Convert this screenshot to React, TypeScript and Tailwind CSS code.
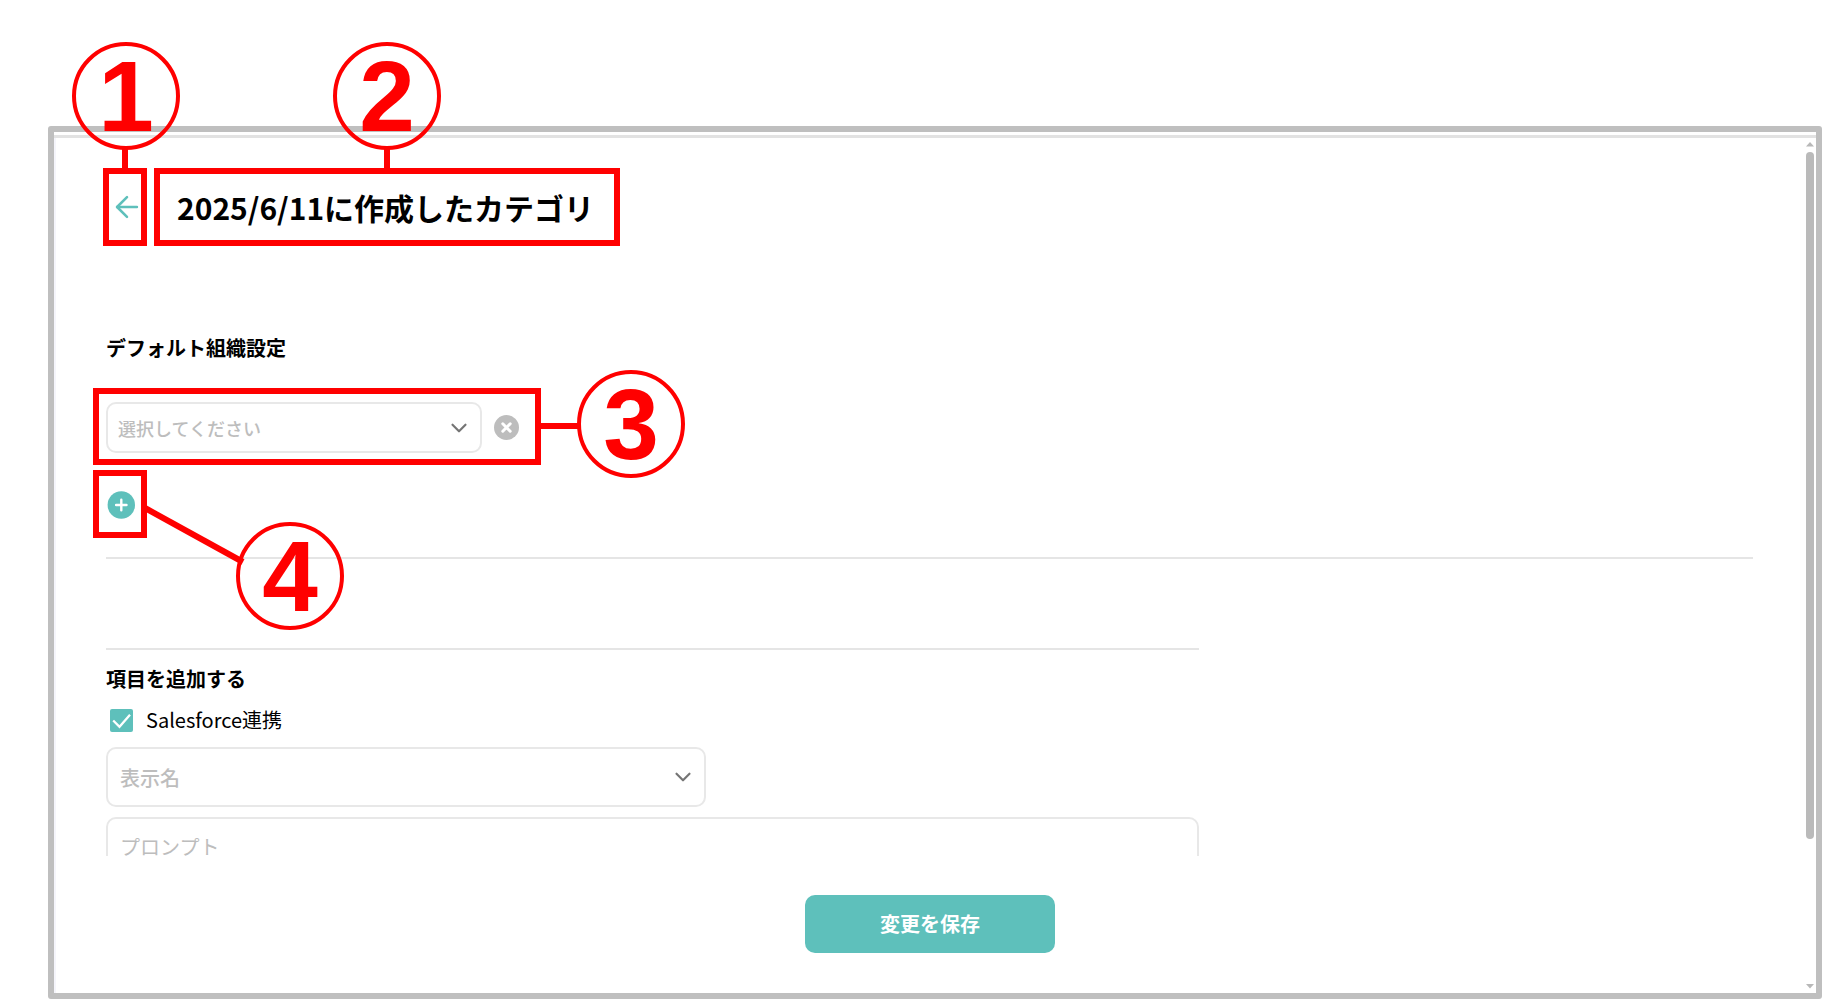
import React, { FC, ReactNode } from "react";
import { ArrowLeft, ChevronDown } from "lucide-react";

interface IBadge {
  label: string;
  customClass?: string;
}

const Badge: FC<IBadge> = ({ label, customClass }) => {
  return (
    <span
      className={`absolute flex h-[108px] w-[108px] items-center justify-center rounded-full border-4 border-[#ff0000] font-['Liberation_Sans',sans-serif] text-[100px] leading-none font-bold text-[#ff0000] ${customClass}`}
    >
      {label}
    </span>
  );
};

interface IHighlight {
  customClass?: string;
  children?: ReactNode;
}

// red frame laid over the element it explains
const Highlight: FC<IHighlight> = ({ customClass, children }) => {
  return (
    <div
      className={`pointer-events-none absolute z-10 border-6 border-[#ff0000] ${customClass}`}
    >
      {children}
    </div>
  );
};

interface ISelectBox {
  id: string;
  label: string;
  placeholder: string;
  customClass?: string;
  selectClass?: string;
}

const SelectBox: FC<ISelectBox> = ({
  id,
  label,
  placeholder,
  customClass,
  selectClass,
}) => {
  return (
    <div className={`relative ${customClass}`}>
      <select
        id={id}
        aria-label={label}
        defaultValue=""
        className={`h-full w-full appearance-none rounded-[10px] border-2 border-[#e8e8e8] bg-white pr-12 font-medium text-[#bdbdbd] ${selectClass}`}
      >
        <option value="">{placeholder}</option>
      </select>
      <ChevronDown
        size={26}
        strokeWidth={2}
        className="pointer-events-none absolute inset-y-0 right-[10px] my-auto text-[#757575]"
      />
    </div>
  );
};

const ScrollBar: FC = () => {
  return (
    <div className="mr-0.5 flex w-2 flex-col items-center pt-1 pb-1">
      <svg width="8" height="5" viewBox="0 0 8 5" fill="#b8b8b8">
        <path d="M4 0l4 4.5H0z" />
      </svg>
      <div className="mt-[5px] flex w-2 flex-1 flex-col">
        <div className="h-[82.6%] rounded-full bg-[#bababa]" />
      </div>
      <svg width="8" height="5" viewBox="0 0 8 5" fill="#b8b8b8">
        <path d="M4 4.5L0 0h8z" />
      </svg>
    </div>
  );
};

export default function App() {
  return (
    <div
      lang="ja"
      className="flex h-screen flex-col bg-white pt-[126px] pr-px pb-px pl-12 font-['Noto_Sans_CJK_JP',sans-serif] text-black"
    >
      <div className="flex min-h-0 flex-1 flex-col rounded-[3px] border-6 border-[#bfbfbf] pt-[3px]">
        <div className="flex min-h-0 flex-1 border-t-3 border-[#e2e2e2]">
          <main className="flex min-w-0 flex-1 flex-col border-l-2 border-[#f5f5fb]">
            <header className="mt-[30px] flex h-[78px] pl-[50px]">
              <div className="relative flex w-[42px]">
                <button
                  type="button"
                  aria-label="戻る"
                  className="flex w-full items-center justify-center text-[#5ec0bb]"
                >
                  <ArrowLeft size={34} strokeWidth={1.8} />
                </button>
                <Highlight customClass="inset-y-0 right-px -left-[3px]">
                  <span className="absolute -top-[26px] left-[13px] h-5 w-1.5 bg-[#ff0000]" />
                  <Badge label="1" customClass="-top-[132px] -left-[37px]" />
                </Highlight>
              </div>
              <div className="relative ml-1.5 flex items-center pr-[26px] pl-[23px]">
                <h1 className="text-[30px] leading-10 font-bold whitespace-nowrap">
                  2025/6/11に作成したカテゴリ
                </h1>
                <Highlight customClass="inset-0">
                  <span className="absolute -top-[26px] left-[224px] h-5 w-1.5 bg-[#ff0000]" />
                  <Badge label="2" customClass="-top-[132px] left-[173px]" />
                </Highlight>
              </div>
            </header>

            <div className="min-h-0 flex-1 overflow-hidden pt-[87px] pr-[53px] pl-[50px]">
              <h2 className="text-xl leading-[30px] font-bold">
                デフォルト組織設定
              </h2>
              <div className="relative mt-[39px] flex h-[51px] w-fit items-center gap-3">
                <SelectBox
                  id="organization"
                  label="デフォルト組織設定"
                  placeholder="選択してください"
                  customClass="h-full w-[376px]"
                  selectClass="pl-[10px] text-lg"
                />
                <button type="button" aria-label="削除">
                  <svg width="25" height="25" viewBox="0 0 25 25" fill="none">
                    <circle cx="12.5" cy="12.5" r="12.5" fill="#bdbdbd" />
                    <path
                      d="M8.8 8.8l7.4 7.4M16.2 8.8l-7.4 7.4"
                      stroke="#fff"
                      strokeWidth="3"
                      strokeLinecap="round"
                    />
                  </svg>
                </button>
                <Highlight customClass="-top-[14px] -right-[22px] -bottom-3 -left-[13px]">
                  <span className="absolute top-[29px] -right-[43px] h-1.5 w-[37px] bg-[#ff0000]" />
                  <Badge label="3" customClass="-top-6 -right-[150px]" />
                </Highlight>
              </div>

              <div className="relative mt-[38px] w-fit">
                <button type="button" aria-label="追加" className="block">
                  <svg width="30" height="28" viewBox="0 0 30 28" fill="none">
                    <circle cx="15.3" cy="14" r="13.7" fill="#5ec0bb" />
                    <path
                      d="M15.3 8.8v10.4M10.1 14h10.4"
                      stroke="#fff"
                      strokeWidth="2.4"
                      strokeLinecap="round"
                    />
                  </svg>
                </button>
                <Highlight customClass="-top-[21px] -right-[11px] -bottom-[19px] -left-[13px]">
                  <svg
                    width="100"
                    height="62"
                    viewBox="0 0 100 62"
                    className="absolute top-7 left-[46px]"
                  >
                    <path d="M0 4L98 58" stroke="#ff0000" strokeWidth="6" />
                  </svg>
                  <Badge label="4" customClass="top-[46px] left-[137px]" />
                </Highlight>
              </div>

              <hr className="mt-[38px] border-t-2 border-[#e5e5e5]" />

              <section className="mt-[89px] w-full max-w-[1093px]">
                <hr className="border-t-2 border-[#e5e5e5]" />
                <h2 className="mt-[14px] text-xl leading-[30px] font-bold">
                  項目を追加する
                </h2>
                <div className="mt-[11px] flex items-center pl-1">
                  <span className="relative flex h-[23px] w-[23px]">
                    <input
                      id="salesforce"
                      type="checkbox"
                      defaultChecked
                      className="h-full w-full appearance-none rounded-[2px] bg-[#5ec0bb]"
                    />
                    <svg
                      viewBox="0 0 23 23"
                      fill="none"
                      className="pointer-events-none absolute inset-0"
                    >
                      <path
                        d="M3.2 11.5l6.3 6.3L20 5.8"
                        stroke="#fff"
                        strokeWidth="2.3"
                      />
                    </svg>
                  </span>
                  <label
                    htmlFor="salesforce"
                    className="pl-[13px] text-xl leading-[30px]"
                  >
                    Salesforce連携
                  </label>
                </div>
                <SelectBox
                  id="displayName"
                  label="表示名"
                  placeholder="表示名"
                  customClass="mt-3 h-[60px] w-full max-w-[600px]"
                  selectClass="pt-0.5 pl-3 text-xl"
                />
                <textarea
                  aria-label="プロンプト"
                  placeholder="プロンプト"
                  className="mt-[10px] block h-[120px] w-full resize-none rounded-[10px] border-2 border-[#e8e8e8] px-3 py-[13px] text-xl leading-[30px] placeholder:text-[#bdbdbd]"
                />
              </section>
            </div>

            <footer className="flex justify-center pt-[39px] pr-[53px] pb-10 pl-[51px]">
              <button
                type="button"
                className="h-[58px] w-[250px] rounded-[10px] bg-[#5ec0bb] text-xl font-bold text-white"
              >
                変更を保存
              </button>
            </footer>
          </main>
          <ScrollBar />
        </div>
      </div>
    </div>
  );
}
